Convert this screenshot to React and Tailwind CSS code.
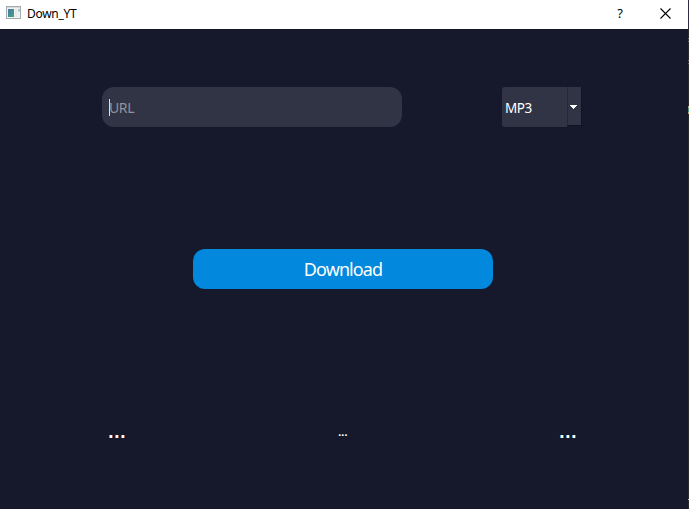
function TitleBar() {
  return (
    <header className="flex h-[29px] shrink-0 items-start bg-white text-black">
      <svg className="ml-[6px] mt-[6px] h-[14px] w-4" viewBox="0 0 16 14" shapeRendering="crispEdges">
        <defs>
          <linearGradient id="pane" x1="0" y1="0" x2="1" y2="1">
            <stop offset="0" stopColor="#4779ae" />
            <stop offset="1" stopColor="#48a276" />
          </linearGradient>
        </defs>
        <rect x="0.5" y="0.5" width="14" height="12" fill="#f0f0f0" stroke="#a5adb0" />
        <rect x="1" y="1" width="13" height="1" fill="#d5dadc" />
        <rect x="2" y="3" width="6" height="8" fill="url(#pane)" />
        <rect x="9" y="3" width="2" height="8" fill="#e6e8e9" />
        <rect x="12" y="3" width="2" height="2" fill="#a9cbd6" />
        <rect x="12" y="5" width="2" height="1" fill="#b5d8c0" />
      </svg>
      <h1 className="ml-[5px] mt-[6px] w-[60px] whitespace-nowrap text-[12px] leading-4 tracking-[-0.3px]">Down_YT</h1>
      <span className="ml-auto mt-[4px] w-[10px] text-center text-[13px] leading-[18px]">?</span>
      <svg className="ml-[35px] mr-[17px] mt-[8px] h-[11px] w-[11px]" viewBox="0 0 11 11">
        <path d="M.5.5l10 10M10.5.5l-10 10" stroke="#000" strokeWidth="1.1" />
      </svg>
    </header>
  );
}

function Desktop() {
  return (
    <svg className="h-[509px] w-px shrink-0" viewBox="0 0 1 509" shapeRendering="crispEdges">
      <rect width="1" height="509" fill="#29292b" />
      <rect y="0" width="1" height="29" fill="#302c48" />
      <rect y="38" width="1" height="1" fill="#80647e" />
      <rect y="41" width="1" height="1" fill="#80647e" />
      <rect y="60" width="1" height="1" fill="#80647e" />
      <rect y="63" width="1" height="1" fill="#80647e" />
      <rect y="106" width="1" height="2" fill="#b6a66c" />
      <rect y="108" width="1" height="4" fill="#4b927b" />
      <rect y="112" width="1" height="2" fill="#b6a66c" />
      <rect y="499" width="1" height="1" fill="#c8c8c8" />
    </svg>
  );
}

export default function App() {
  return (
    <div className="flex h-[509px] w-[689px] overflow-hidden bg-[#16192b] font-['Noto_Sans',sans-serif]">
      <div className="flex w-[688px] flex-col">
        <TitleBar />
        <main className="flex flex-1 flex-col text-white">
          <div className="mt-[58px] flex h-10">
            <div className="ml-[102px] flex h-10 w-[300px] items-center rounded-[12px] bg-[#313445] pl-[7px]">
              <span className="h-[17px] w-px bg-[#e6e4c8]" />
              <span className="-ml-px pt-[2px] text-[14px] leading-5 tracking-[-0.4px] text-[#92939c]">URL</span>
            </div>
            <div className="ml-[100px] flex h-10 w-[80px]">
              <span className="flex w-[65px] items-center rounded-l-[3px] bg-[#313445] pl-[3px] pt-[2px] text-[13.5px] leading-5 tracking-[-0.5px]">
                MP3
              </span>
              <span className="flex h-[39px] w-[15px] items-center border-b border-l border-r border-b-[#11131f] border-l-[#25283a] border-r-[#11131f] bg-[#313445] pl-[2px] pt-[2px]">
                <svg className="h-[4px] w-[7px]" viewBox="0 0 7 4" shapeRendering="crispEdges">
                  <path d="M0 0h7v1H0zM1 1h5v1H1zM2 2h3v1H2zM3 3h1v1H3z" fill="#fff" />
                </svg>
              </span>
            </div>
          </div>
          <button className="ml-[193px] mt-[122px] h-10 w-[300px] rounded-[12px] bg-[#0288dc] pt-px text-[18px] leading-[39px] tracking-[-0.9px]">
            Download
          </button>
          <div className="mt-[132px] flex h-6 font-['DejaVu_Sans',sans-serif] font-bold">
            <span className="ml-[108px] w-[20px] text-[15px] leading-6 tracking-[0.3px]">...</span>
            <span className="ml-[210px] w-[12px] text-[9px] leading-6 tracking-[-0.3px]">...</span>
            <span className="ml-[209px] w-[20px] text-[15px] leading-6 tracking-[0.3px]">...</span>
          </div>
        </main>
      </div>
      <Desktop />
    </div>
  );
}
